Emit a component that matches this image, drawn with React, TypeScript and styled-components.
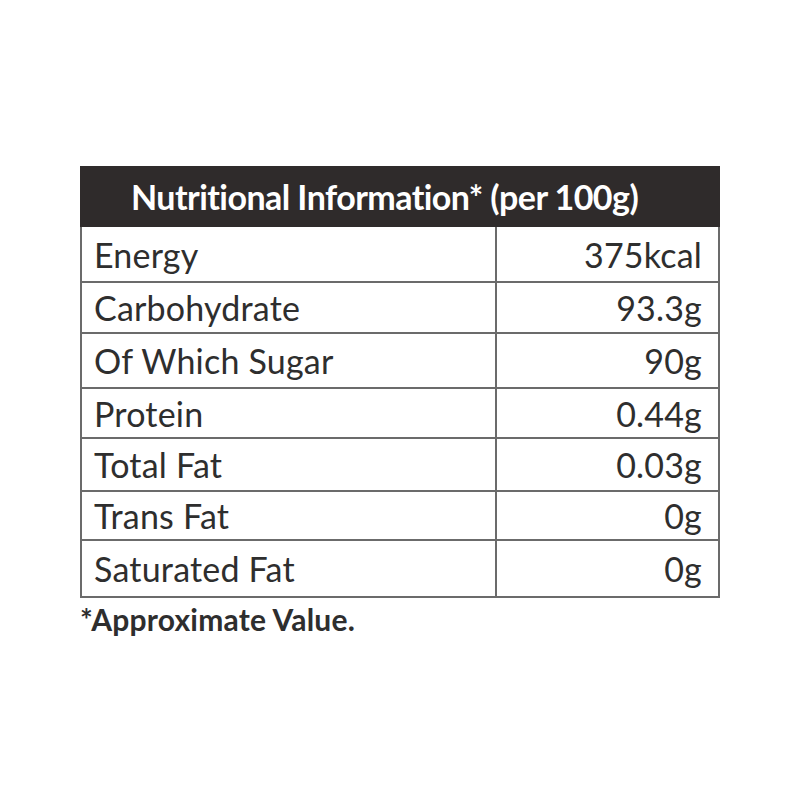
import React from 'react';
import styled, { createGlobalStyle } from 'styled-components';

const GlobalStyle = createGlobalStyle`
  body {
    margin: 0;
    background: #ffffff;
    font-family: Lato, "Open Sans", sans-serif;
  }
`

const Page = styled.div`
  width: 800px;
  height: 800px;
  padding: 166px 0 0 80px;
  box-sizing: border-box;
`

const Table = styled.div`
  width: 640px;
  border: 2px solid #6b6b6b;
  border-top: none;
  box-sizing: border-box;
`

const Header = styled.div`
  height: 61px;
  margin: 0 -2px;
  background: #2f2b2b;
  color: #ffffff;
  display: flex;
  align-items: center;
  padding-left: 51px;
  font-weight: 700;
  font-size: 34px;
  letter-spacing: -0.55px;
`

const Row = styled.div<{ $h: number; $last?: boolean }>`
  display: grid;
  grid-template-columns: 415px 1fr;
  height: ${p => p.$h}px;
  border-bottom: ${p => (p.$last ? 'none' : '2px solid #6b6b6b')};
  box-sizing: border-box;
  color: #2e2e2e;
  font-size: 34px;
  letter-spacing: 0.2px;
`

const Label = styled.div`
  display: flex;
  align-items: center;
  padding-left: 12px;
  border-right: 2px solid #6b6b6b;
`

const Value = styled.div`
  display: flex;
  align-items: center;
  justify-content: flex-end;
  padding-right: 16px;
`

const Note = styled.div`
  margin-top: 3px;
  font-weight: 700;
  font-size: 30px;
  letter-spacing: 0.2px;
  color: #2e2e2e;
`

interface Item {
  name: string;
  value: string;
  h: number;
}

const items: Item[] = [
  { name: 'Energy', value: '375kcal', h: 56 },
  { name: 'Carbohydrate', value: '93.3g', h: 51 },
  { name: 'Of Which Sugar', value: '90g', h: 55 },
  { name: 'Protein', value: '0.44g', h: 50 },
  { name: 'Total Fat', value: '0.03g', h: 53 },
  { name: 'Trans Fat', value: '0g', h: 49 },
  { name: 'Saturated Fat', value: '0g', h: 55 },
]

const App = () => {
  return (
    <Page>
      <GlobalStyle />
      <Table>
        <Header>Nutritional Information* (per 100g)</Header>
        {items.map((it, i) => (
          <Row key={it.name} $h={it.h} $last={i === items.length - 1}>
            <Label>{it.name}</Label>
            <Value>{it.value}</Value>
          </Row>
        ))}
      </Table>
      <Note>*Approximate Value.</Note>
    </Page>
  )
}

export default App;
